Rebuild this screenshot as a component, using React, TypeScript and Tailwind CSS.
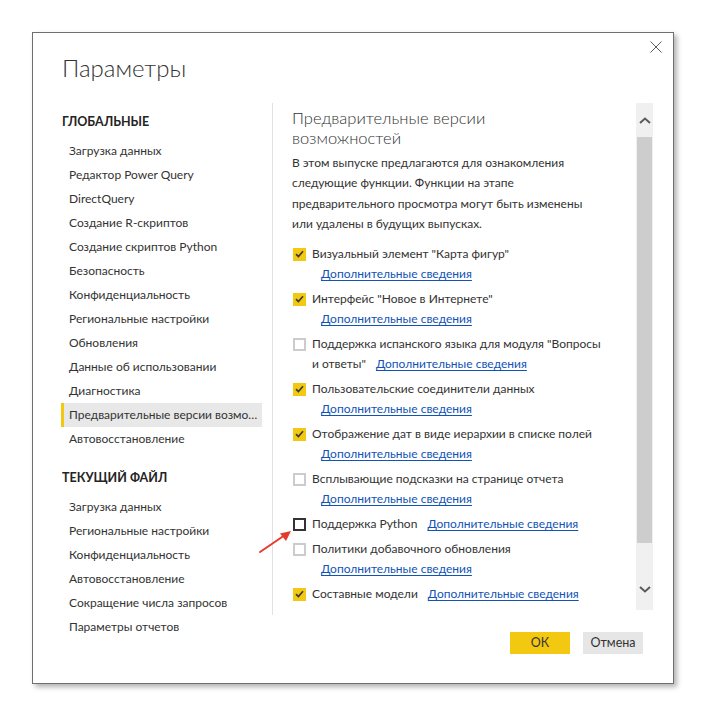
import React from "react";

type Feature = {
  label: string;
  checked: boolean;
  inline?: boolean;
  focused?: boolean;
};

const globalItems = [
  "Загрузка данных",
  "Редактор Power Query",
  "DirectQuery",
  "Создание R-скриптов",
  "Создание скриптов Python",
  "Безопасность",
  "Конфиденциальность",
  "Региональные настройки",
  "Обновления",
  "Данные об использовании",
  "Диагностика",
  "Предварительные версии возможностей",
  "Автовосстановление",
];

const fileItems = [
  "Загрузка данных",
  "Региональные настройки",
  "Конфиденциальность",
  "Автовосстановление",
  "Сокращение числа запросов",
  "Параметры отчетов",
];

const features: Feature[] = [
  { label: 'Визуальный элемент "Карта фигур"', checked: true },
  { label: 'Интерфейс "Новое в Интернете"', checked: true },
  { label: 'Поддержка испанского языка для модуля "Вопросы и ответы"', checked: false, inline: true },
  { label: "Пользовательские соединители данных", checked: true },
  { label: "Отображение дат в виде иерархии в списке полей", checked: true },
  { label: "Всплывающие подсказки на странице отчета", checked: false },
  { label: "Поддержка Python", checked: false, inline: true, focused: true },
  { label: "Политики добавочного обновления", checked: false },
  { label: "Составные модели", checked: true, inline: true },
];

const font = { fontFamily: 'Lato, "Open Sans", sans-serif' };

const Checkbox: React.FC<{ checked: boolean; focused?: boolean }> = ({ checked, focused }) => {
  if (checked) {
    return (
      <span className="mt-[4px] flex h-[13px] w-[13px] shrink-0 items-center justify-center bg-[#f2c811]">
        <svg width="9" height="8" viewBox="0 0 9 8">
          <path d="M1 4.2 L3.4 6.5 L8 1.3" fill="none" stroke="#3a3a3a" strokeWidth="1.7" />
        </svg>
      </span>
    );
  }
  return (
    <span
      className={
        focused
          ? "mt-[4px] h-[13px] w-[13px] shrink-0 border-2 border-[#333333]"
          : "mt-[4px] h-[13px] w-[13px] shrink-0 border-2 border-[#cccccc]"
      }
    />
  );
};

const MoreLink: React.FC = () => (
  <a href="#" className="whitespace-nowrap text-[#1153b6] underline underline-offset-2">
    Дополнительные сведения
  </a>
);

const NavItem: React.FC<{ label: string; active?: boolean }> = ({ label, active }) => (
  <div
    className={
      active
        ? "h-6 truncate border-l-[3px] border-[#f2c811] bg-[#e8e8e8] pl-[5px] pr-1 leading-6"
        : "h-6 truncate pl-[8px] pr-1 leading-6"
    }
  >
    {label}
  </div>
);

export default function App() {
  return (
    <div className="min-h-[715px] w-[705px] bg-white pl-[32px] pt-[32px]" style={font}>
      <div className="relative h-[652px] w-[642px] border border-[#6f6f6f] bg-white text-[12px] text-[#333333] shadow-[3px_3px_5px_rgba(0,0,0,0.3)]">
        {/* close */}
        <button className="absolute right-[11px] top-[8px] p-0">
          <svg width="12" height="12" viewBox="0 0 12 12">
            <path d="M0.5 0.5 L11.5 11.5 M11.5 0.5 L0.5 11.5" stroke="#5a5a5a" strokeWidth="1" />
          </svg>
        </button>

        <h1 className="pl-[29px] pt-[17px] text-[24px] font-light leading-[36px] text-[#333333]">Параметры</h1>

        <div className="mt-[17px] flex">
          {/* left nav */}
          <div className="w-[239px] shrink-0 pl-[29px]">
            <div className="pt-[7px] text-[12.5px] font-bold leading-6 text-[#252423]">ГЛОБАЛЬНЫЕ</div>
            <div className="mt-[5px] w-[201px] -ml-[1px]">
              {globalItems.map((item, i) => (
                <NavItem key={item} label={item} active={i === 11} />
              ))}
            </div>
            <div className="mt-[15px] text-[12.5px] font-bold leading-6 text-[#252423]">ТЕКУЩИЙ ФАЙЛ</div>
            <div className="mt-[5px] w-[201px] -ml-[1px]">
              {fileItems.map((item) => (
                <NavItem key={item} label={item} />
              ))}
            </div>
          </div>

          {/* right panel */}
          <div className="flex h-[512px] flex-1 border-l border-[#e1e1e1]">
            <div className="flex-1 overflow-hidden pl-[19px] pr-[10px] pt-[5px]">
              <h2 className="w-[300px] text-[16.5px] font-light leading-[20px] text-[#333333]">
                Предварительные версии возможностей
              </h2>
              <p className="mt-[5px] w-[300px] leading-[20.4px]">
                В этом выпуске предлагаются для ознакомления следующие функции. Функции на этапе
                предварительного просмотра могут быть изменены или удалены в будущих выпусках.
              </p>
              <div className="mt-[9px]">
                {features.map((f) => (
                  <div key={f.label} className="mb-[5px] flex gap-[6px] pl-[1px] leading-5">
                    <Checkbox checked={f.checked} focused={f.focused} />
                    <div className="w-[292px]">
                      {f.inline ? (
                        <span>
                          {f.label}
                          <span className="ml-[10px]">
                            <MoreLink />
                          </span>
                        </span>
                      ) : (
                        <>
                          <div>{f.label}</div>
                          <div className="pl-[9px]">
                            <MoreLink />
                          </div>
                        </>
                      )}
                    </div>
                  </div>
                ))}
              </div>
            </div>

            {/* scrollbar */}
            <div className="mr-[20px] flex h-[507px] w-[17px] flex-col bg-[#f0f0f0]">
              <div className="flex h-[34px] items-center justify-center">
                <svg width="12" height="7" viewBox="0 0 12 7">
                  <path d="M1 6 L6 1.5 L11 6" fill="none" stroke="#5a5a5a" strokeWidth="2" />
                </svg>
              </div>
              <div className="mx-[1px] h-[406px] bg-[#cdcdcd]" />
              <div className="flex flex-1 items-end justify-center pb-[17px]">
                <svg width="12" height="7" viewBox="0 0 12 7">
                  <path d="M1 1 L6 5.5 L11 1" fill="none" stroke="#5a5a5a" strokeWidth="2" />
                </svg>
              </div>
            </div>
          </div>
        </div>

        {/* buttons */}
        <div className="absolute bottom-[29px] right-[30px] flex gap-[13px]">
          <button className="h-[22px] w-[60px] bg-[#f2c811] text-[12.5px] text-[#333333]">ОК</button>
          <button className="h-[22px] w-[60px] bg-[#e6e6e6] text-[12.5px] text-[#333333]">Отмена</button>
        </div>

        {/* annotation arrow */}
        <svg className="pointer-events-none absolute left-[222px] top-[492px]" width="40" height="30" viewBox="0 0 40 30">
          <path d="M5 27 L30 10" stroke="#e53b2c" strokeWidth="2" strokeLinecap="round" />
          <path d="M36 6 L25 8.5 L31 16 Z" fill="#e53b2c" />
        </svg>
      </div>
    </div>
  );
}
